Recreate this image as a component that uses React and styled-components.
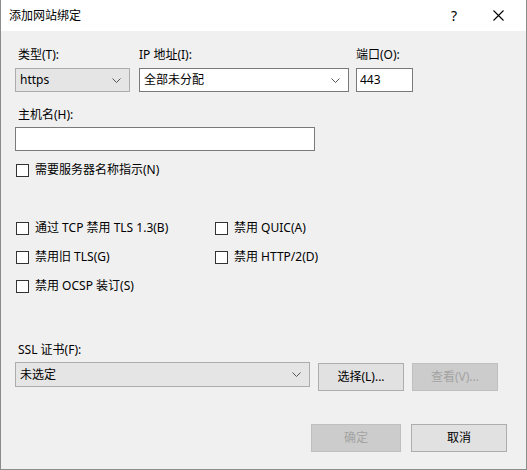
import React from 'react';
import styled, { createGlobalStyle } from 'styled-components';

const GlobalStyle = createGlobalStyle`
  body {
    margin: 0;
    background: #f0f0f0;
  }
`;

const StyledWindow = styled.div`
  box-sizing: border-box;
  width: 527px;
  height: 470px;
  background: #f0f0f0;
  border-left: 1px solid #8c8c8c;
  border-right: 1px solid #8c8c8c;
  border-bottom: 1px solid #8c8c8c;
  font-family: "Noto Sans", "Noto Sans CJK SC", sans-serif;
  font-size: 12px;
  line-height: 16px;
  color: #000;
  display: flex;
  flex-direction: column;
`;

const StyledTitleBar = styled.div`
  height: 31px;
  background: #fff;
  display: flex;
  align-items: center;
  padding-left: 8px;
  padding-right: 6px;

  span {
    flex: 1;
  }
`;

const StyledTitleButton = styled.div`
  width: 44px;
  height: 31px;
  display: flex;
  align-items: center;
  justify-content: center;
  font-size: 14px;
`;

const StyledBody = styled.div`
  flex: 1;
  padding: 16px 20px 0 14px;
  display: flex;
  flex-direction: column;
`;

const StyledTopRow = styled.div`
  display: grid;
  grid-template-columns: 115px 210px 57px;
  column-gap: 9px;
  align-items: end;

  > div:last-child {
    margin-left: -2px;
  }
`;

const StyledLabel = styled.div`
  padding-left: ${(p) => (p.$flush ? 0 : 3)}px;
  margin-top: ${(p) => p.$top || 0}px;
  margin-bottom: ${(p) => p.$bottom || 5}px;
`;

const StyledSelect = styled.div`
  box-sizing: border-box;
  width: ${(p) => p.$width || '100%'};
  height: ${(p) => p.$height || 24}px;
  display: flex;
  align-items: center;
  padding: 0 8px 0 4px;
  background: ${(p) => (p.$white ? '#fff' : '#e5e5e5')};
  border: 1px solid ${(p) => (p.$white ? '#7a7a7a' : '#acacac')};

  span {
    flex: 1;
  }
`;

const StyledInput = styled.div`
  box-sizing: border-box;
  width: ${(p) => p.$width};
  height: 24px;
  background: #fff;
  border: 1px solid #7a7a7a;
  padding-left: 3px;
  display: flex;
  align-items: center;
`;

const StyledCheckRow = styled.label`
  display: flex;
  align-items: center;
  height: 16px;
  gap: 6px;
  margin-left: 1px;

  i {
    box-sizing: border-box;
    width: 13px;
    height: 13px;
    background: #fff;
    border: 1px solid #333;
  }
`;

const StyledCheckGrid = styled.div`
  display: grid;
  grid-template-columns: 199px 1fr;
  row-gap: 13px;
  margin-top: 42px;
`;

const StyledSslRow = styled.div`
  display: flex;
  align-items: flex-start;
  gap: 8px;
`;

const StyledButton = styled.div`
  box-sizing: border-box;
  width: ${(p) => p.$width}px;
  height: 28px;
  margin-top: ${(p) => p.$top || 0}px;
  display: flex;
  align-items: center;
  justify-content: center;
  background: ${(p) => (p.$disabled ? '#cccccc' : '#e1e1e1')};
  border: 1px solid ${(p) => (p.$disabled ? '#bfbfbf' : '#adadad')};
  color: ${(p) => (p.$disabled ? '#a3a3a3' : '#000')};
`;

const StyledFooter = styled.div`
  display: flex;
  justify-content: flex-end;
  gap: 10px;
  margin-top: 33px;
  margin-right: -1px;
`;

const Chevron = () => (
  <svg width='9' height='5' viewBox='0 0 9 5'>
    <path d='M0.5 0.5 L4.5 4.5 L8.5 0.5' fill='none' stroke='#555' strokeWidth='1' />
  </svg>
);

const Check = ({ children }) => (
  <StyledCheckRow>
    <i />
    {children}
  </StyledCheckRow>
);

const App = () => (
  <>
    <GlobalStyle />
    <StyledWindow>
      <StyledTitleBar>
        <span>添加网站绑定</span>
        <StyledTitleButton>?</StyledTitleButton>
        <StyledTitleButton>
          <svg width='11' height='11' viewBox='0 0 11 11'>
            <path d='M0.5 0.5 L10.5 10.5 M10.5 0.5 L0.5 10.5' stroke='#000' strokeWidth='1.1' />
          </svg>
        </StyledTitleButton>
      </StyledTitleBar>

      <StyledBody>
        <StyledTopRow>
          <div>
            <StyledLabel>类型(T):</StyledLabel>
            <StyledSelect>
              <span>https</span>
              <Chevron />
            </StyledSelect>
          </div>
          <div>
            <StyledLabel $flush>IP 地址(I):</StyledLabel>
            <StyledSelect $white>
              <span>全部未分配</span>
              <Chevron />
            </StyledSelect>
          </div>
          <div>
            <StyledLabel $flush>端口(O):</StyledLabel>
            <StyledInput $width='57px'>443</StyledInput>
          </div>
        </StyledTopRow>

        <StyledLabel $top={15} $bottom={4}>主机名(H):</StyledLabel>
        <StyledInput $width='300px' />

        <div style={{ marginTop: 11 }}>
          <Check>需要服务器名称指示(N)</Check>
        </div>

        <StyledCheckGrid>
          <Check>通过 TCP 禁用 TLS 1.3(B)</Check>
          <Check>禁用 QUIC(A)</Check>
          <Check>禁用旧 TLS(G)</Check>
          <Check>禁用 HTTP/2(D)</Check>
          <Check>禁用 OCSP 装订(S)</Check>
        </StyledCheckGrid>

        <StyledLabel $top={48} $bottom={4}>SSL 证书(F):</StyledLabel>
        <StyledSslRow>
          <StyledSelect $width='295px' $height={25}>
            <span>未选定</span>
            <Chevron />
          </StyledSelect>
          <StyledButton $width={86} $top={1}>选择(L)...</StyledButton>
          <StyledButton $width={86} $top={1} $disabled>查看(V)...</StyledButton>
        </StyledSslRow>

        <StyledFooter>
          <StyledButton $width={90} $disabled>确定</StyledButton>
          <StyledButton $width={96}>取消</StyledButton>
        </StyledFooter>
      </StyledBody>
    </StyledWindow>
  </>
);

export default App;
